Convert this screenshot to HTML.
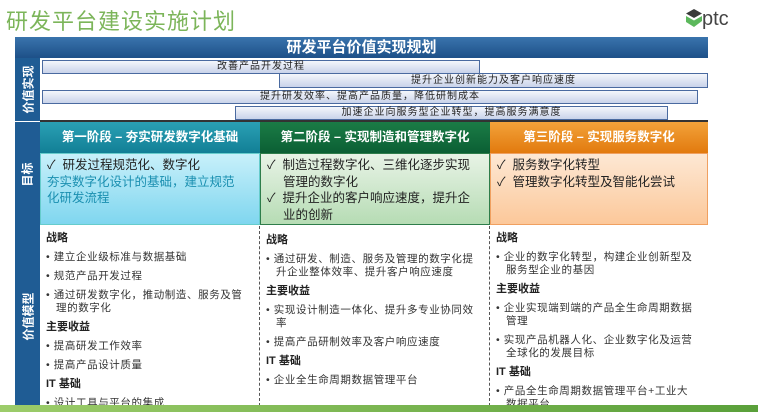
<!DOCTYPE html>
<html><head><meta charset="utf-8"><style>
*{margin:0;padding:0;box-sizing:border-box}
body{width:758px;height:412px;overflow:hidden;background:#fff;font-family:"Liberation Sans","Noto Sans CJK SC",sans-serif;position:relative}
.a{position:absolute}
.title{left:6px;top:4px;font-size:22px;color:#7cb55a;letter-spacing:1px}
.hdr{left:15px;top:37px;width:693px;height:21px;background:linear-gradient(#3a74ad,#1d5088);color:#fff;font-size:15px;text-align:center;line-height:21px;font-weight:bold}
.side{left:15px;width:25px;background:#1f5c94;color:#fff;font-weight:bold;font-size:12px;display:flex;align-items:center;justify-content:center}
.side span{transform:rotate(-90deg);white-space:nowrap}
.bar{height:14px;background:linear-gradient(#f4f6fb,#c9d3ea);border:1px solid #4a6aa0;font-size:10px;color:#222;line-height:12px;text-align:center;letter-spacing:1px}
.sh{top:122px;height:31px;color:#fff;font-weight:bold;font-size:12.5px;text-align:center;line-height:31px}
.sc{top:153px;height:72px;font-size:12.5px;color:#222;line-height:16.5px;padding:3px 8px 3px 6px}
.sc p{padding-left:16px;text-indent:-16px}
.col{top:226px;height:180px;font-size:10.5px;color:#333;line-height:13px;padding:6px 12px 5px 6px;overflow:hidden;letter-spacing:.6px}
.col b{display:block;font-size:11px;color:#222;margin:0 0 6px;letter-spacing:0}
.col p{padding-left:10px;text-indent:-10px;margin-bottom:6px}
</style></head><body>
<div class="a title">研发平台建设实施计划</div>
<div class="a" style="left:686px;top:8px;font-size:20px;color:#444"><svg width="16" height="18" viewBox="0 0 16 18" style="vertical-align:-2px"><path d="M8 0L16 4.5 8 9 0 4.5z" fill="#3a3a3a"/><path d="M0 7L8 11.5 16 7v5L8 18 0 13z" fill="#5cb85c"/></svg>ptc</div>
<div class="a hdr">研发平台价值实现规划</div>
<div class="a side" style="top:58px;height:63px"><span>价值实现</span></div>
<div class="a" style="left:40px;top:58px;width:668px;height:63px;background:#fff"></div>
<div class="a bar" style="left:42px;top:60px;width:438px">改善产品开发过程</div>
<div class="a bar" style="left:279px;top:73px;width:429px;line-height:13px;height:15px">提升企业创新能力及客户响应速度</div>
<div class="a bar" style="left:42px;top:90px;width:656px">提升研发效率、提高产品质量，降低研制成本</div>
<div class="a bar" style="left:235px;top:106px;width:433px">加速企业向服务型企业转型，提高服务满意度</div>
<div class="a" style="left:40px;top:120px;width:668px;height:2px;background:#333"></div>
<div class="a side" style="top:122px;height:104px"><span>目标</span></div>
<div class="a sh" style="left:40px;width:220px;background:linear-gradient(#2aa0b4,#127f96)">第一阶段 – 夯实研发数字化基础</div>
<div class="a sh" style="left:260px;width:230px;background:linear-gradient(#1b7c46,#0b5f34)">第二阶段 – 实现制造和管理数字化</div>
<div class="a sh" style="left:490px;width:218px;background:linear-gradient(#f2a23a,#e27a0e)">第三阶段 – 实现服务数字化</div>
<div class="a sc" style="left:40px;width:220px;background:linear-gradient(#c8f0fa,#7fd6ef);border:1px solid #6cc;padding-right:18px">✓&nbsp; 研发过程规范化、数字化<br><span style="color:#1a8fb0">夯实数字化设计的基础，建立规范化研发流程</span></div>
<div class="a sc" style="left:260px;width:230px;background:linear-gradient(#e8f3e6,#b6dcb4);border:1px solid #2e7d4a"><p>✓&nbsp; 制造过程数字化、三维化逐步实现管理的数字化</p><p>✓&nbsp; 提升企业的客户响应速度，提升企业的创新</p></div>
<div class="a sc" style="left:490px;width:218px;background:linear-gradient(#fde8d4,#fcc89a);border:1px solid #f0a060"><p>✓&nbsp; 服务数字化转型</p><p>✓&nbsp; 管理数字化转型及智能化尝试</p></div>
<div class="a side" style="top:226px;height:180px"><span>价值模型</span></div>
<div class="a col" style="left:40px;width:220px;border-right:1px dashed #555"><b>战略</b><p>• 建立企业级标准与数据基础</p><p>• 规范产品开发过程</p><p>• 通过研发数字化，推动制造、服务及管理的数字化</p><b>主要收益</b><p>• 提高研发工作效率</p><p>• 提高产品设计质量</p><b>IT 基础</b><p>• 设计工具与平台的集成</p></div>
<div class="a col" style="left:260px;width:230px;border-right:1px dashed #555"><b style="margin-top:2px">战略</b><p>• 通过研发、制造、服务及管理的数字化提升企业整体效率、提升客户响应速度</p><b>主要收益</b><p>• 实现设计制造一体化、提升多专业协同效率</p><p>• 提高产品研制效率及客户响应速度</p><b>IT 基础</b><p>• 企业全生命周期数据管理平台</p></div>
<div class="a col" style="left:490px;width:218px"><b>战略</b><p>• 企业的数字化转型，构建企业创新型及服务型企业的基因</p><b>主要收益</b><p>• 企业实现端到端的产品全生命周期数据管理</p><p>• 实现产品机器人化、企业数字化及运营全球化的发展目标</p><b>IT 基础</b><p>• 产品全生命周期数据管理平台+工业大数据平台</p></div>
<div class="a" style="left:0;top:405px;width:758px;height:7px;background:linear-gradient(90deg,#9ccc6a,#5aa03a)"></div>
</body></html>
